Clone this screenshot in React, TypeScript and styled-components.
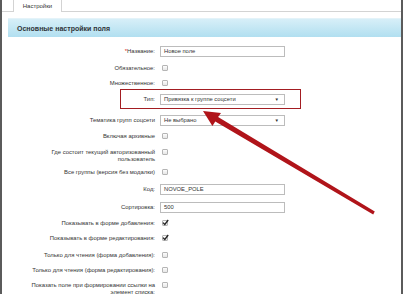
import React from "react";
import styled, { createGlobalStyle } from "styled-components";

const Global = createGlobalStyle`
  html, body { margin: 0; padding: 0; background: #fff; overflow: hidden; }
  body { font-family: "Liberation Sans", Arial, sans-serif; }
`;

const Frame = styled.div`
  position: relative;
  width: 403px;
  height: 294px;
  box-sizing: border-box;
  border-left: 2px solid #5b5b5b;
  border-right: 2px solid #5b5b5b;
  overflow: hidden;
  display: flex;
  flex-direction: column;
`;

const TabBar = styled.div`
  height: 11px;
  border-bottom: 1px solid #d3d3d3;
  padding-left: 11px;
  display: flex;
  align-items: flex-end;
`;

const Tab = styled.div`
  width: 49px;
  height: 12px;
  box-sizing: border-box;
  border-left: 1px solid #d3d3d3;
  border-right: 1px solid #d3d3d3;
  background: #fff;
  margin-bottom: -1px;
  padding-bottom: 1px;
  font-size: 6px;
  color: #333;
  display: flex;
  align-items: center;
  justify-content: center;
`;

const Panel = styled.div`
  padding: 6px 0 0 6px;
  display: flex;
  flex-direction: column;
`;

const Header = styled.div`
  height: 19px;
  box-sizing: border-box;
  background: linear-gradient(#d7eff8, #b1dff0);
  border-top: 1px solid #e4f3f9;
  padding-left: 9px;
  display: flex;
  align-items: center;
  font-size: 7px;
  font-weight: bold;
  color: #2f3438;
`;

const Form = styled.div`
  margin-top: 10px;
  display: flex;
  flex-direction: column;
`;

const Row = styled.div<{ $h: number }>`
  display: grid;
  grid-template-columns: 147px 1fr;
  column-gap: 5px;
  align-items: start;
  height: ${(p) => p.$h}px;
  flex-shrink: 0;
`;

const Label = styled.div`
  text-align: right;
  font-size: 5.9px;
  line-height: 7px;
  padding-top: 0.5px;
  color: #333;
  white-space: nowrap;
`;

const Req = styled.span`
  color: #e0141e;
`;

const Control = styled.div`
  height: 8px;
  display: flex;
  align-items: center;
`;

const Field = styled.div`
  flex-shrink: 0;
  width: 125px;
  height: 11px;
  box-sizing: border-box;
  border: 1px solid #bcbcbc;
  background: #fff;
  padding: 0 3px;
  font-size: 5.8px;
  color: #333;
  display: flex;
  align-items: center;
  justify-content: space-between;
`;

const Caret = styled.span`
  font-size: 4.5px;
  color: #333;
  margin-right: 2px;
`;

const Box = styled.div`
  width: 6px;
  height: 6px;
  box-sizing: border-box;
  margin-left: 2px;
  border: 1px solid #b5b5b5;
  border-radius: 1px;
  background: linear-gradient(#fdfdfd, #e6e6e6);
  position: relative;
`;

const Tick = styled.svg`
  position: absolute;
  left: -1px;
  top: -2px;
  width: 7px;
  height: 7px;
`;

const Highlight = styled.div`
  position: absolute;
  left: 118px;
  top: 89px;
  width: 181px;
  height: 20px;
  box-sizing: border-box;
  border: 1.5px solid #a31d22;
  pointer-events: none;
`;

const ArrowLayer = styled.svg`
  position: absolute;
  left: -2px;
  top: 0;
  width: 403px;
  height: 294px;
  pointer-events: none;
`;

function Check({ on }: { on?: boolean }) {
  return (
    <Box>
      {on && (
        <Tick viewBox="0 0 7 7">
          <path d="M1 3.6 L2.8 5.4 L6.2 1" stroke="#222" strokeWidth="1.3" fill="none" />
        </Tick>
      )}
    </Box>
  );
}

type RowDef = {
  h: number;
  label: React.ReactNode;
  kind: "text" | "select" | "check";
  value?: string;
  on?: boolean;
};

const rows: RowDef[] = [
  { h: 17, label: <><Req>*</Req>Название:</>, kind: "text", value: "Новое поле" },
  { h: 15, label: "Обязательное:", kind: "check" },
  { h: 16, label: "Множественное:", kind: "check" },
  { h: 21, label: "Тип:", kind: "select", value: "Привязка к группе соцсети" },
  { h: 16, label: "Тематика групп соцсети", kind: "select", value: "Не выбрано" },
  { h: 16, label: "Включая архивные", kind: "check" },
  { h: 20, label: <>Где состоит текущий авторизованный<br />пользователь</>, kind: "check" },
  { h: 17, label: "Все группы (версия без модалки)", kind: "check" },
  { h: 18, label: "Код:", kind: "text", value: "NOVOE_POLE" },
  { h: 16, label: "Сортировка:", kind: "text", value: "500" },
  { h: 15, label: "Показывать в форме добавления:", kind: "check", on: true },
  { h: 17, label: "Показывать в форме редактирования:", kind: "check", on: true },
  { h: 15, label: "Только для чтения (форма добавления):", kind: "check" },
  { h: 15, label: "Только для чтения (форма редактирования):", kind: "check" },
  { h: 20, label: <>Показать поле при формировании ссылки на<br />элемент списка:</>, kind: "check" },
];

export default function App() {
  return (
    <>
      <Global />
      <Frame>
        <TabBar>
          <Tab>Настройки</Tab>
        </TabBar>
        <Panel>
          <Header>Основные настройки поля</Header>
          <Form>
            {rows.map((r, i) => (
              <Row key={i} $h={r.h}>
                <Label>{r.label}</Label>
                <Control>
                  {r.kind === "text" && <Field>{r.value}</Field>}
                  {r.kind === "select" && (
                    <Field>
                      <span>{r.value}</span>
                      <Caret>▼</Caret>
                    </Field>
                  )}
                  {r.kind === "check" && <Check on={r.on} />}
                </Control>
              </Row>
            ))}
          </Form>
        </Panel>
        <Highlight />
        <ArrowLayer viewBox="0 0 403 294">
          <polygon
            points="203,111 221,113 218.1,117 374.8,211.6 373.2,214.4 215.3,121.4 212.4,126"
            fill="#b0141a"
          />
        </ArrowLayer>
      </Frame>
    </>
  );
}
